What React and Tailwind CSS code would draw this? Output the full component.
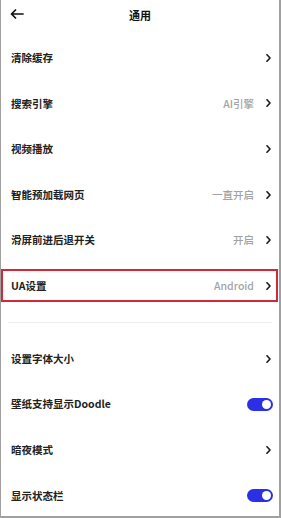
import React from "react";

const font = { fontFamily: '"Noto Sans CJK SC", "Noto Sans", sans-serif' };

function Chevron() {
  return (
    <svg width="5" height="8" viewBox="0 0 5 8" className="shrink-0">
      <path d="M1 0.8 L4 4 L1 7.2" fill="none" stroke="#1a1a1a" strokeWidth="1.6" strokeLinecap="round" strokeLinejoin="round" />
    </svg>
  );
}

function Toggle() {
  return (
    <div className="w-[26px] h-[13px] rounded-full bg-[#2b30e6] flex items-center justify-end pr-[2px] mr-[-2px]">
      <div className="w-[9px] h-[9px] rounded-full bg-white" />
    </div>
  );
}

function Row({ label, value, toggle, highlight }) {
  return (
    <div className="relative h-[45.6px] flex items-center justify-between pl-[10px] pr-[8px]">
      <span className="text-[10.5px] font-bold text-[#222]">{label}</span>
      <div className="flex items-center gap-[12px]">
        {value && <span className="text-[10.5px] font-medium text-[#a3a3a3]">{value}</span>}
        {toggle ? <Toggle /> : <Chevron />}
      </div>
      {highlight && (
        <div className="absolute left-0 right-[1px] top-[6px] h-[33px] border-2 border-[#d3283a] pointer-events-none" />
      )}
    </div>
  );
}

export default function App() {
  return (
    <div style={font} className="w-[281px] h-[518px] bg-white border-l border-r-2 border-b-2 border-[#a0a0a0] overflow-hidden">
      <div className="relative h-[35px] flex items-start justify-center pt-[5px]">
        <svg width="14" height="10" viewBox="0 0 14 10" className="absolute left-[9px] top-[9px]">
          <path d="M13 5 H1.5 M5.5 1 L1.5 5 L5.5 9" fill="none" stroke="#111" strokeWidth="1.7" strokeLinecap="round" strokeLinejoin="round" />
        </svg>
        <span className="text-[11px] font-bold text-[#111] leading-[20px]">通用</span>
      </div>
      <Row label="清除缓存" />
      <Row label="搜索引擎" value="AI引擎" />
      <Row label="视频播放" />
      <Row label="智能预加载网页" value="一直开启" />
      <Row label="滑屏前进后退开关" value="开启" />
      <Row label="UA设置" value="Android" highlight />
      <div className="h-[27.4px] flex items-center px-[7px]">
        <div className="w-full h-px bg-[#ededed]" />
      </div>
      <Row label="设置字体大小" />
      <Row label="壁纸支持显示Doodle" toggle />
      <Row label="暗夜模式" />
      <Row label="显示状态栏" toggle />
    </div>
  );
}
